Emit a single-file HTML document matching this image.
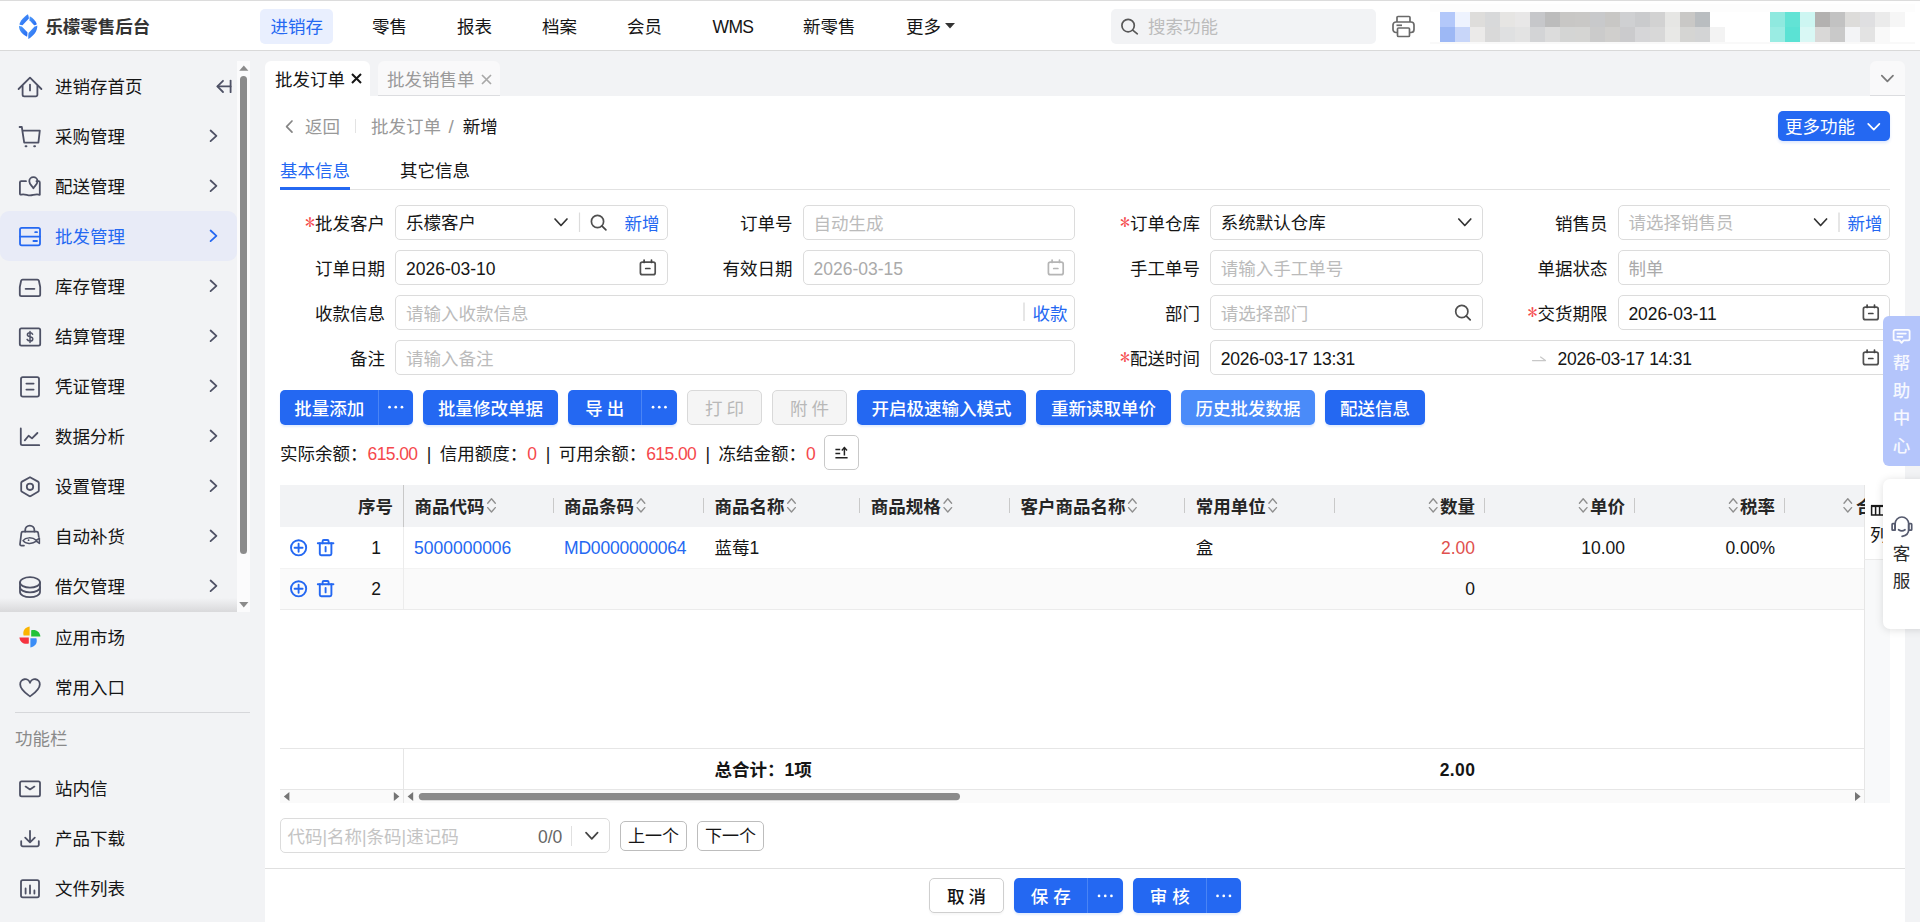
<!DOCTYPE html>
<html lang="zh-CN">
<head>
<meta charset="utf-8">
<title>乐檬零售后台</title>
<style>
*{box-sizing:border-box;margin:0;padding:0}
html,body{width:1920px;height:922px;overflow:hidden;background:#f2f3f5}
body{font-family:"Liberation Sans","Noto Sans CJK SC",sans-serif;font-size:17.5px;color:#151515;position:relative;line-height:1}
.abs{position:absolute}
.t{position:absolute;white-space:nowrap;line-height:24px;height:24px}
svg{position:absolute;overflow:visible}
/* header */
#hdr{position:absolute;left:0;top:0;width:1920px;height:51px;background:#fff;border-top:1px solid #dcdcdc;border-bottom:1px solid #d9d9d9}
.nav{position:absolute;top:14px;line-height:24px;height:24px;font-size:17.5px;color:#151515;white-space:nowrap}
/* sidebar */
#side{position:absolute;left:0;top:51px;width:265px;height:871px;background:#f2f3f5}
.mi{position:absolute;left:55px;font-size:17.5px;line-height:24px;height:24px;color:#151515;white-space:nowrap}
.chev{position:absolute;left:207px;width:12px;height:16px}
/* main */
#panel{position:absolute;left:265px;top:96px;width:1640px;height:826px;background:#fff}
.lbl{position:absolute;font-size:17.5px;line-height:24px;height:24px;white-space:nowrap;text-align:right;color:#151515}
.req{color:#f5484c;font-family:"IPAGothic","Liberation Sans",sans-serif;font-size:20px;position:relative;top:0.4px;line-height:0;margin-right:0}
.inp{position:absolute;height:35px;border:1px solid #dcdcdc;border-radius:5px;background:#fff}
.ph{color:#bbb}
.btn{position:absolute;top:390px;height:35px;background:#2468f2;color:#fff;border-radius:4px;font-size:17.5px;line-height:35px;text-align:center;white-space:nowrap}
.btn.dis{background:#f5f5f5;border:1px solid #dcdcdc;color:#b8b8b8;line-height:33px}
.blue{color:#2468f2}
.red{color:#f23c3c}
.bar{margin:0 8.4px 0 9.4px;color:#151515}
.bal .red{letter-spacing:-0.6px;color:#f5484c}
</style>
</head>
<body>
<!--HEADER-->
<div id="hdr">
<svg style="left:19px;top:13px" width="19" height="26" viewBox="19 14 19 26">
<defs><linearGradient id="lg" x1="0" y1="0" x2="1" y2="1"><stop offset="0" stop-color="#4d9bfa"/><stop offset="1" stop-color="#2468f2"/></linearGradient></defs>
<path d="M27.9 14.3 C23.8 17.2 20.2 20.8 19.4 24.4 C20.4 24.9 21.4 25.1 22.5 25.2 L28.9 18.4 C28.8 17 28.5 15.6 27.9 14.3 Z" fill="url(#lg)"/>
<path d="M29.8 16.2 C33 18 35.8 20.8 36.9 24.2 C36 24.8 35.1 25.1 34.1 25.3 L29.5 20.2 C29.4 18.8 29.5 17.5 29.8 16.2 Z" fill="url(#lg)"/>
<path d="M19 25.8 C18.8 30.6 22.4 34.4 27.1 36.8 C27.4 35.2 27.5 33.6 27.4 32.2 L21.8 26.4 C20.8 26.3 19.9 26.1 19 25.8 Z" fill="url(#lg)"/>
<path d="M37.3 25.4 C37.6 31.4 33.2 36 28.3 39 C28.2 37 28.2 35 28.5 33 L34.6 26.6 C35.5 26.4 36.4 26 37.3 25.4 Z" fill="url(#lg)"/>
</svg>
<div class="t" style="left:45.4px;top:14px;font-size:17.5px;font-weight:700;color:#333;letter-spacing:-0.05px">乐檬零售后台</div>
<div class="abs" style="left:260px;top:8px;width:73px;height:35px;background:#e9effe;border-radius:5px"></div>
<div class="nav" style="left:270.4px;color:#2468f2">进销存</div>
<div class="nav" style="left:372px">零售</div>
<div class="nav" style="left:457px">报表</div>
<div class="nav" style="left:542px">档案</div>
<div class="nav" style="left:627px">会员</div>
<div class="nav" style="left:712.6px;letter-spacing:-0.7px">WMS</div>
<div class="nav" style="left:803px">新零售</div>
<div class="nav" style="left:906px">更多</div>
<svg style="left:944.6px;top:22px" width="11" height="6"><path d="M0 0 L10 0 L5 5.5 Z" fill="#333"/></svg>
<div class="abs" style="left:1111px;top:8px;width:265px;height:35px;background:#f2f3f5;border-radius:5px"></div>
<svg style="left:1119px;top:15px" width="20" height="20" viewBox="0 0 20 20"><circle cx="9.1" cy="9.6" r="6.2" fill="none" stroke="#585858" stroke-width="1.7"/><path d="M13.7 14.2 L18.3 17.8" stroke="#585858" stroke-width="1.7" stroke-linecap="round"/></svg>
<div class="t" style="left:1148px;top:14px;color:#bcbcbc">搜索功能</div>
<svg style="left:1392px;top:14px" width="23" height="23" viewBox="0 0 23 23" fill="none" stroke="#6a6a6a" stroke-width="1.7" stroke-linejoin="round"><path d="M5 7 V2.5 a1 1 0 0 1 1-1 H17 a1 1 0 0 1 1 1 V7"/><rect x="1" y="7" width="21" height="10.5" rx="3"/><rect x="5.5" y="13" width="12" height="8.5" rx="1" fill="#fff"/><path d="M4.5 10.3 H10"/></svg>
<svg style="left:0;top:-1px" width="1920" height="50" shape-rendering="crispEdges"><rect x="1430" y="4" width="485" height="8" fill="#fdfdfd"/><rect x="1430" y="42" width="485" height="2" fill="#f9f9f9"/><rect x="1440" y="12" width="15" height="15" fill="#b3c8fa"/><rect x="1455" y="12" width="15" height="15" fill="#eef3fe"/><rect x="1470" y="12" width="15" height="15" fill="#dedddb"/><rect x="1485" y="12" width="15" height="15" fill="#d8d9da"/><rect x="1500" y="12" width="15" height="15" fill="#e6e5e3"/><rect x="1515" y="12" width="15" height="15" fill="#e8e7e7"/><rect x="1530" y="12" width="15" height="15" fill="#c6c7ca"/><rect x="1545" y="12" width="15" height="15" fill="#bcbcbc"/><rect x="1560" y="12" width="15" height="15" fill="#c8c7c5"/><rect x="1575" y="12" width="15" height="15" fill="#c9c8c6"/><rect x="1590" y="12" width="15" height="15" fill="#c8c9cb"/><rect x="1605" y="12" width="15" height="15" fill="#c8c7c5"/><rect x="1620" y="12" width="15" height="15" fill="#cfd0d2"/><rect x="1635" y="12" width="15" height="15" fill="#cacbcd"/><rect x="1650" y="12" width="15" height="15" fill="#d2d2d2"/><rect x="1665" y="12" width="15" height="15" fill="#e6e6e4"/><rect x="1680" y="12" width="15" height="15" fill="#c9c8c6"/><rect x="1695" y="12" width="15" height="15" fill="#b9bdc0"/><rect x="1440" y="27" width="15" height="15" fill="#9db8f5"/><rect x="1455" y="27" width="15" height="15" fill="#c8d6f9"/><rect x="1470" y="27" width="15" height="15" fill="#ebeae9"/><rect x="1485" y="27" width="15" height="15" fill="#d9d9d9"/><rect x="1500" y="27" width="15" height="15" fill="#dfe0e1"/><rect x="1515" y="27" width="15" height="15" fill="#e3e3e3"/><rect x="1530" y="27" width="15" height="15" fill="#d3d4d6"/><rect x="1545" y="27" width="15" height="15" fill="#dcdcdc"/><rect x="1560" y="27" width="15" height="15" fill="#d4d5d4"/><rect x="1575" y="27" width="15" height="15" fill="#d5d5d3"/><rect x="1590" y="27" width="15" height="15" fill="#cbcbcb"/><rect x="1605" y="27" width="15" height="15" fill="#d0cfcd"/><rect x="1620" y="27" width="15" height="15" fill="#cbcbcd"/><rect x="1635" y="27" width="15" height="15" fill="#d6d6d8"/><rect x="1650" y="27" width="15" height="15" fill="#d8d8d8"/><rect x="1665" y="27" width="15" height="15" fill="#e8e8e6"/><rect x="1680" y="27" width="15" height="15" fill="#d5d5d3"/><rect x="1695" y="27" width="15" height="15" fill="#d3d4d5"/><rect x="1710" y="27" width="15" height="15" fill="#f3f3f3"/><rect x="1770" y="12" width="15" height="15" fill="#8fe9df"/><rect x="1785" y="12" width="15" height="15" fill="#62e3d5"/><rect x="1800" y="12" width="15" height="15" fill="#cdf6f2"/><rect x="1815" y="12" width="15" height="15" fill="#b3b1b0"/><rect x="1830" y="12" width="15" height="15" fill="#c2c2c2"/><rect x="1845" y="12" width="15" height="15" fill="#dddcda"/><rect x="1860" y="12" width="15" height="15" fill="#dfdfe1"/><rect x="1875" y="12" width="15" height="15" fill="#ebebeb"/><rect x="1890" y="12" width="15" height="15" fill="#f6f6f6"/><rect x="1770" y="27" width="15" height="15" fill="#9aece3"/><rect x="1785" y="27" width="15" height="15" fill="#5be2d4"/><rect x="1800" y="27" width="15" height="15" fill="#d9f8f5"/><rect x="1815" y="27" width="15" height="15" fill="#d9d8d7"/><rect x="1830" y="27" width="15" height="15" fill="#c9c9c9"/><rect x="1845" y="27" width="15" height="15" fill="#f3f4f6"/><rect x="1860" y="27" width="15" height="15" fill="#e3e3e3"/><rect x="1875" y="27" width="15" height="15" fill="#f9f9f9"/></svg>
</div>
<!--SIDEBAR-->
<div id="side" style="top:0;height:922px;background:none">
<div class="abs" style="left:0;top:211px;width:237px;height:50px;background:#e8ebf7;border-radius:9px"></div>
<div class="abs" style="left:237px;top:61px;width:13px;height:551px;background:#fbfbfc"></div>
<div class="abs" style="left:240px;top:76px;width:7px;height:478px;background:#8b8b8b;border-radius:3.5px"></div>
<svg style="left:238px;top:60px" width="12" height="552"><path d="M1.2 10.8 L5.8 5.6 L10.4 10.8 Z" fill="#8b8b8b"/><path d="M1.2 542 L5.8 547.4 L10.4 542 Z" fill="#8b8b8b"/></svg>
<div class="abs" style="left:0;top:598px;width:237px;height:14px;background:linear-gradient(to bottom,rgba(242,243,245,0),#d9d9db)"></div>
<svg style="left:0;top:0" width="260" height="922" fill="none" stroke="#4e5165" stroke-width="1.8" stroke-linecap="round" stroke-linejoin="round"><path d="M18.6 89 L30 77.6 L41.4 89"/><path d="M22.6 86 V94.8 a1.6 1.6 0 0 0 1.6 1.6 H35.8 a1.6 1.6 0 0 0 1.6 -1.6 V86"/><path d="M30 84.6 V90.4"/><path d="M230.6 80.6 V92.2"/><path d="M217.6 86.4 H230.6"/><path d="M223 80.8 L217.4 86.4 L223 92"/><path d="M19.6 127 H21.8 L24.2 142.6 H38.4 L39.8 130.6 H22.6"/><path d="M25.6 146.2 h0.8 M34.2 146.2 h0.8" stroke-width="2"/><path d="M26 181.2 H21.2 a1.3 1.3 0 0 0 -1.3 1.3 V193.6 a1 1 0 0 0 1.3 1 C24.5 193.6 27 195.4 30 195.4 C33 195.4 36 193.4 39.8 194.8 V182.4 a1.2 1.2 0 0 0 -1.2 -1.2 H36.5"/><path d="M33.4 177.2 a4.1 4.1 0 0 1 4.1 4.1 c0 2.8 -2.6 4.6 -4.1 6.9 c-1.5 -2.3 -4.1 -4.1 -4.1 -6.9 a4.1 4.1 0 0 1 4.1 -4.1 z"/><path d="M22.6 279.6 H37.4 a1.6 1.6 0 0 1 1.5 1.1 L40.2 287 V294.6 a1.6 1.6 0 0 1 -1.6 1.6 H21.4 a1.6 1.6 0 0 1 -1.6 -1.6 V287 L21.1 280.7 a1.6 1.6 0 0 1 1.5 -1.1 z"/><path d="M25.6 288.8 H34.4"/><rect x="19.8" y="328.4" width="20.4" height="17.2" rx="1.6"/><path d="M32.6 334.2 C32.2 333.2 31.2 332.8 30 332.8 C28.4 332.8 27.4 333.6 27.4 334.8 C27.4 337.6 32.8 336 32.8 338.9 C32.8 340.2 31.6 341 30 341 C28.6 341 27.5 340.4 27.1 339.4 M30 331.4 V342.6" stroke-width="1.5"/><rect x="21" y="377.2" width="18" height="19.4" rx="1.8"/><path d="M26.4 383.6 H33.6 M26.4 389.6 H33.6"/><path d="M20.8 428.4 V443.6 a1.6 1.6 0 0 0 1.6 1.6 H39.2"/><path d="M24.8 440.4 L28.6 435.8 L32 438.4 L37.4 433"/><path d="M30 477.2 L38 481.6 a1.6 1.6 0 0 1 .8 1.4 V490.4 a1.6 1.6 0 0 1 -.8 1.4 L30.8 496 a1.6 1.6 0 0 1 -1.6 0 L22 491.8 a1.6 1.6 0 0 1 -.8 -1.4 V483 a1.6 1.6 0 0 1 .8 -1.4 Z"/><circle cx="30" cy="486.8" r="3.2"/><path d="M25.2 531.6 V530.2 a4.6 4.6 0 0 1 9.2 0 V531.6"/><path d="M24 545.6 H21.4 a1.4 1.4 0 0 1 -1.4 -1.6 L21.4 532.8 a1.4 1.4 0 0 1 1.4 -1.2 H36.8 a1.4 1.4 0 0 1 1.4 1.2 L38.8 537" stroke-width="1.7"/><path d="M23 540.6 C25.5 537.4 32 536.6 36.4 540.4 L39.4 538.2 V543.4 L36.4 541.2 C32 544.6 25.5 544 23 540.6 Z" stroke-width="1.5"/><circle cx="28.6" cy="540.2" r="0.9" fill="#4e5165" stroke="none"/><ellipse cx="30" cy="582.4" rx="10" ry="5.2"/><path d="M20 582.4 V587.2 c0 2.9 4.5 5.2 10 5.2 s10 -2.3 10 -5.2 V582.4"/><path d="M20 587.2 V592 c0 2.9 4.5 5.2 10 5.2 s10 -2.3 10 -5.2 V587.2"/><path d="M30 696.4 C27 694 20.2 689.6 20.2 684.4 a5 5 0 0 1 9.8 -1.6 a5 5 0 0 1 9.8 1.6 C39.8 689.6 33 694 30 696.4 Z"/><rect x="20" y="781.4" width="20" height="15" rx="1.6"/><path d="M25.6 786.6 L30 789.4 L34.4 786.6"/><path d="M30 830.8 V842 M25.2 837.6 L30 842.4 L34.8 837.6"/><path d="M21.2 841.2 V844.8 a1.6 1.6 0 0 0 1.6 1.6 H37.2 a1.6 1.6 0 0 0 1.6 -1.6 V841.2"/><rect x="21" y="880.2" width="18" height="17.2" rx="1.8"/><path d="M25.6 888.4 V893.6 M30 885.4 V893.6 M34.4 890.4 V893.6"/><path d="M210.6 130.5 L216.4 135.8 L210.6 141.1"/><path d="M210.6 180.5 L216.4 185.8 L210.6 191.1"/><path d="M210.6 280.5 L216.4 285.8 L210.6 291.1"/><path d="M210.6 330.5 L216.4 335.8 L210.6 341.1"/><path d="M210.6 380.5 L216.4 385.8 L210.6 391.1"/><path d="M210.6 430.5 L216.4 435.8 L210.6 441.1"/><path d="M210.6 480.5 L216.4 485.8 L210.6 491.1"/><path d="M210.6 530.5 L216.4 535.8 L210.6 541.1"/><path d="M210.6 580.5 L216.4 585.8 L210.6 591.1"/></svg>
<svg style="left:0;top:0" width="260" height="922" fill="none" stroke="#2468f2" stroke-width="1.8" stroke-linecap="round" stroke-linejoin="round"><rect x="20" y="227.8" width="20" height="17.6" rx="1.8"/><path d="M20 236.6 H40 M35.2 232.2 H37 M33.4 241 H37"/><path d="M210.6 230.5 L216.4 235.8 L210.6 241.1"/></svg>
<svg style="left:0;top:0" width="60" height="922">
<path d="M29.6 626.6 C24.6 627.4 22.4 631.4 23.6 635.6 L29.6 635.6 Z" fill="#fbb400"/>
<path d="M40.4 636.4 C39.8 631.2 35.6 629 31.2 630.2 L31.2 636.4 Z" fill="#22c238"/>
<path d="M19.4 637.4 C20.2 642.6 24.4 644.8 28.8 643.4 L28.8 637.4 Z" fill="#f5333f"/>
<path d="M30.4 647.4 C35.4 646.6 37.8 642.6 36.4 638.2 L30.4 638.2 Z" fill="#3b8df6"/>
</svg>
<div class="mi" style="top:75px">进销存首页</div>
<div class="mi" style="top:125px">采购管理</div>
<div class="mi" style="top:175px">配送管理</div>
<div class="mi" style="top:225px;color:#2468f2">批发管理</div>
<div class="mi" style="top:275px">库存管理</div>
<div class="mi" style="top:325px">结算管理</div>
<div class="mi" style="top:375px">凭证管理</div>
<div class="mi" style="top:425px">数据分析</div>
<div class="mi" style="top:475px">设置管理</div>
<div class="mi" style="top:525px">自动补货</div>
<div class="mi" style="top:575px">借欠管理</div>
<div class="mi" style="top:626px">应用市场</div>
<div class="mi" style="top:676px">常用入口</div>
<div class="mi" style="top:776.5px">站内信</div>
<div class="mi" style="top:826.5px">产品下载</div>
<div class="mi" style="top:876.5px">文件列表</div>

<div class="abs" style="left:15px;top:712px;width:235px;height:1px;background:#d6d7da"></div>
<div class="t" style="left:15px;top:727px;color:#8a8a8a">功能栏</div>
</div>
<!--MAIN-->
<div id="tabs">
<div class="abs" style="left:265px;top:61px;width:105px;height:36px;background:#fff;border-radius:6px 6px 0 0"></div>
<div class="t" style="left:275px;top:68px">批发订单</div>
<svg style="left:351px;top:73px" width="11" height="11"><path d="M1 1 L10 10 M10 1 L1 10" stroke="#151515" stroke-width="2"/></svg>
<div class="abs" style="left:378px;top:61px;width:122px;height:35px;background:#f9f9fa;border-radius:6px 6px 0 0;border-bottom:1px solid #dcdde0"></div>
<div class="t" style="left:387px;top:68px;color:#9a9a9a">批发销售单</div>
<svg style="left:481px;top:74px" width="11" height="11"><path d="M1 1 L10 10 M10 1 L1 10" stroke="#a8a8a8" stroke-width="1.7"/></svg>
<div class="abs" style="left:1870px;top:61px;width:35px;height:35px;background:#f9f9fa;border-radius:6px 6px 0 0;border-bottom:1px solid #dcdde0"></div>
<svg style="left:1880px;top:74px" width="14" height="9"><path d="M1.8 1.6 L7.4 7.4 L13 1.6" stroke="#7a7a7a" stroke-width="1.7" fill="none" stroke-linecap="round" stroke-linejoin="round"/></svg>
</div>
<div id="panel">
<div class="t" style="left:40px;top:19px;color:#999">返回</div>
<div class="t" style="left:106px;top:19px;color:#999">批发订单<span style="margin:0 9px 0 7.5px;font-size:19px">/</span><span style="color:#151515">新增</span></div>
<div class="abs" style="left:1513px;top:15px;width:112px;height:30px;background:#2468f2;border-radius:5px;box-shadow:0 2px 3px rgba(36,104,242,.15)"></div>
<div class="t" style="left:1520px;top:19px;color:#fff">更多功能</div>
<div class="t" style="left:15px;top:62.5px;color:#2468f2">基本信息</div>
<div class="t" style="left:135px;top:62.5px;">其它信息</div>
<div class="abs" style="left:15px;top:93px;width:1610px;height:1px;background:#e2e2e2"></div>
<div class="abs" style="left:15px;top:90.5px;width:70px;height:3.5px;background:#2468f2"></div>
<div class="inp" style="left:130px;top:109px;width:273px"></div>
<div class="inp" style="left:538px;top:109px;width:272px"></div>
<div class="inp" style="left:945px;top:109px;width:273px"></div>
<div class="inp" style="left:1353px;top:109px;width:272px"></div>
<div class="inp" style="left:130px;top:154px;width:273px"></div>
<div class="inp" style="left:538px;top:154px;width:272px"></div>
<div class="inp" style="left:945px;top:154px;width:273px"></div>
<div class="inp" style="left:1353px;top:154px;width:272px"></div>
<div class="inp" style="left:130px;top:199px;width:680px"></div>
<div class="inp" style="left:945px;top:199px;width:273px"></div>
<div class="inp" style="left:1353px;top:199px;width:272px"></div>
<div class="inp" style="left:130px;top:244px;width:680px"></div>
<div class="inp" style="left:945px;top:244px;width:680px"></div>
<div class="lbl" style="right:1520px;top:116px"><span class="req">*</span>批发客户</div>
<div class="lbl" style="right:1112.5px;top:116px">订单号</div>
<div class="lbl" style="right:705px;top:116px"><span class="req">*</span>订单仓库</div>
<div class="lbl" style="right:297.5px;top:116px">销售员</div>
<div class="lbl" style="right:1520px;top:161px">订单日期</div>
<div class="lbl" style="right:1112.5px;top:161px">有效日期</div>
<div class="lbl" style="right:705px;top:161px">手工单号</div>
<div class="lbl" style="right:297.5px;top:161px">单据状态</div>
<div class="lbl" style="right:1520px;top:206px">收款信息</div>
<div class="lbl" style="right:705px;top:206px">部门</div>
<div class="lbl" style="right:297.5px;top:206px"><span class="req">*</span>交货期限</div>
<div class="lbl" style="right:1520px;top:251px">备注</div>
<div class="lbl" style="right:705px;top:251px"><span class="req">*</span>配送时间</div>
<div class="t" style="left:141px;top:114.5px;">乐檬客户</div>
<div class="t" style="left:359.5px;top:115.5px;color:#2468f2">新增</div>
<div class="t" style="left:548.5px;top:115.5px;color:#bbb">自动生成</div>
<div class="t" style="left:955.8px;top:114.5px;">系统默认仓库</div>
<div class="t" style="left:1363.4px;top:114.5px;color:#bbb">请选择销售员</div>
<div class="t" style="left:1582.5px;top:115.5px;color:#2468f2">新增</div>
<div class="t" style="left:141px;top:160.5px;">2026-03-10</div>
<div class="t" style="left:548.5px;top:160.5px;color:#aaa">2026-03-15</div>
<div class="t" style="left:955.8px;top:160.5px;color:#bbb">请输入手工单号</div>
<div class="t" style="left:1363.4px;top:160.5px;color:#aaa">制单</div>
<div class="t" style="left:141px;top:205.5px;color:#bbb">请输入收款信息</div>
<div class="t" style="left:767.5px;top:205.5px;color:#2468f2">收款</div>
<div class="t" style="left:955.8px;top:205.5px;color:#bbb">请选择部门</div>
<div class="t" style="left:1363.4px;top:205.5px;">2026-03-11</div>
<div class="t" style="left:141px;top:250.5px;color:#bbb">请输入备注</div>
<div class="t" style="left:955.8px;top:250.5px;letter-spacing:-0.25px">2026-03-17 13:31</div>
<div class="t" style="left:1292.5px;top:250.5px;letter-spacing:-0.25px">2026-03-17 14:31</div>
<div class="abs" style="left:15px;top:294px;width:133px;height:35px;background:#2468f2;border-radius:5px;box-shadow:0 2px 2px rgba(36,104,242,.12)"></div>
<div class="abs" style="left:113.0px;top:294px;width:1px;height:35px;background:#4a84f5"></div>
<div class="t" style="left:15px;width:98.5px;text-align:center;top:300.5px;color:#fff;font-weight:500;word-spacing:-0.8px">批量添加</div>
<div class="abs" style="left:158px;top:294px;width:135px;height:35px;background:#2468f2;border-radius:5px;box-shadow:0 2px 2px rgba(36,104,242,.12)"></div>
<div class="t" style="left:158px;width:135px;text-align:center;top:300.5px;color:#fff;font-weight:500">批量修改单据</div>
<div class="abs" style="left:303px;top:294px;width:109px;height:35px;background:#2468f2;border-radius:5px;box-shadow:0 2px 2px rgba(36,104,242,.12)"></div>
<div class="abs" style="left:376.0px;top:294px;width:1px;height:35px;background:#4a84f5"></div>
<div class="t" style="left:303px;width:73.5px;text-align:center;top:300.5px;color:#fff;font-weight:500;word-spacing:-0.8px">导 出</div>
<div class="abs" style="left:422px;top:294px;width:75px;height:35px;background:#f5f5f5;border:1px solid #d9d9d9;border-radius:5px"></div>
<div class="t" style="left:422px;width:75px;text-align:center;top:300.5px;color:#b8b8b8;word-spacing:-0.8px">打 印</div>
<div class="abs" style="left:507px;top:294px;width:75px;height:35px;background:#f5f5f5;border:1px solid #d9d9d9;border-radius:5px"></div>
<div class="t" style="left:507px;width:75px;text-align:center;top:300.5px;color:#b8b8b8;word-spacing:-0.8px">附 件</div>
<div class="abs" style="left:592px;top:294px;width:169px;height:35px;background:#2468f2;border-radius:5px;box-shadow:0 2px 2px rgba(36,104,242,.12)"></div>
<div class="t" style="left:592px;width:169px;text-align:center;top:300.5px;color:#fff;font-weight:500">开启极速输入模式</div>
<div class="abs" style="left:771px;top:294px;width:135px;height:35px;background:#2468f2;border-radius:5px;box-shadow:0 2px 2px rgba(36,104,242,.12)"></div>
<div class="t" style="left:771px;width:135px;text-align:center;top:300.5px;color:#fff;font-weight:500">重新读取单价</div>
<div class="abs" style="left:916px;top:294px;width:134px;height:35px;background:#4a8bf9;border-radius:5px;box-shadow:0 2px 2px rgba(36,104,242,.12)"></div>
<div class="t" style="left:916px;width:134px;text-align:center;top:300.5px;color:#fff;font-weight:500">历史批发数据</div>
<div class="abs" style="left:1060px;top:294px;width:100px;height:35px;background:#2468f2;border-radius:5px;box-shadow:0 2px 2px rgba(36,104,242,.12)"></div>
<div class="t" style="left:1060px;width:100px;text-align:center;top:300.5px;color:#fff;font-weight:500">配送信息</div>
<div class="t bal" style="left:15px;top:345.5px;">实际余额：<span class="red">615.00</span><span class="bar">|</span>信用额度：<span class="red">0</span><span class="bar">|</span>可用余额：<span class="red">615.00</span><span class="bar">|</span>冻结金额：<span class="red">0</span></div>
<div class="abs" style="left:559px;top:339px;width:35px;height:35px;border:1px solid #c9c9c9;border-radius:5px;background:#fff"></div>

<div class="abs" style="left:15px;top:389px;width:1584px;height:42px;background:#f2f3f5"></div>
<div class="abs" style="left:15px;top:472px;width:1584px;height:41.5px;background:#fafafa"></div>
<div class="abs" style="left:15px;top:513px;width:1584px;height:1px;background:#ebebeb"></div>
<div class="abs" style="left:15px;top:471.5px;width:1584px;height:1px;background:#f3f3f3"></div>
<div class="abs" style="left:15px;top:652px;width:1584px;height:1px;background:#e6e6e6"></div>
<div class="abs" style="left:15px;top:693px;width:1584px;height:1px;background:#e6e6e6"></div>
<div class="abs" style="left:15px;top:694px;width:1584px;height:13px;background:#fafafa"></div>
<div class="abs" style="left:138px;top:389px;width:1px;height:42px;background:#c8c8c8"></div>
<div class="abs" style="left:138px;top:431px;width:1px;height:82px;background:#ececec"></div>
<div class="abs" style="left:138px;top:653px;width:1px;height:54px;background:#e6e6e6"></div>
<div class="abs" style="left:1599px;top:389px;width:26px;height:318px;background:#f8f9fa;border-left:1px solid #e6e6e6"></div><div class="abs" style="left:1600px;top:389px;width:25px;height:74px;background:#fff"></div>
<div class="abs" style="left:1599px;top:463px;width:26px;height:1px;background:#ebebeb"></div>
<div class="abs" style="left:287.5px;top:402px;width:1px;height:15px;background:#c9c9c9"></div>
<div class="abs" style="left:437.5px;top:402px;width:1px;height:15px;background:#c9c9c9"></div>
<div class="abs" style="left:594.0px;top:402px;width:1px;height:15px;background:#c9c9c9"></div>
<div class="abs" style="left:744.0px;top:402px;width:1px;height:15px;background:#c9c9c9"></div>
<div class="abs" style="left:919.0px;top:402px;width:1px;height:15px;background:#c9c9c9"></div>
<div class="abs" style="left:1069.0px;top:402px;width:1px;height:15px;background:#c9c9c9"></div>
<div class="abs" style="left:1219.0px;top:402px;width:1px;height:15px;background:#c9c9c9"></div>
<div class="abs" style="left:1369.0px;top:402px;width:1px;height:15px;background:#c9c9c9"></div>
<div class="abs" style="left:1519.0px;top:402px;width:1px;height:15px;background:#c9c9c9"></div>
<div class="t" style="right:1512px;top:398.5px;font-weight:700;color:#262626">序号</div>
<div class="t" style="left:149.5px;top:398.5px;font-weight:700;color:#262626">商品代码</div>
<div class="t" style="left:299px;top:398.5px;font-weight:700;color:#262626">商品条码</div>
<div class="t" style="left:449.5px;top:398.5px;font-weight:700;color:#262626">商品名称</div>
<div class="t" style="left:605.8px;top:398.5px;font-weight:700;color:#262626">商品规格</div>
<div class="t" style="left:755.4px;top:398.5px;font-weight:700;color:#262626">客户商品名称</div>
<div class="t" style="left:930.7px;top:398.5px;font-weight:700;color:#262626">常用单位</div>
<div class="t" style="right:430px;top:398.5px;font-weight:700;color:#262626">数量</div>
<div class="t" style="right:280px;top:398.5px;font-weight:700;color:#262626">单价</div>
<div class="t" style="right:130px;top:398.5px;font-weight:700;color:#262626">税率</div>
<div class="abs" style="left:1575px;top:389px;width:24.5px;height:42px;overflow:hidden"><div class="t" style="left:16px;top:9.5px;font-weight:700;color:#262626">合计</div></div>
<div class="t" style="left:101px;width:20px;text-align:center;top:439.5px;">1</div>
<div class="t" style="left:101px;width:20px;text-align:center;top:480.5px;">2</div>
<div class="t" style="left:149px;top:439.5px;color:#2468f2">5000000006</div>
<div class="t" style="left:299px;top:439.5px;color:#2468f2;letter-spacing:-0.18px">MD0000000064</div>
<div class="t" style="left:449.5px;top:439.5px;">蓝莓1</div>
<div class="t" style="left:930.7px;top:439.5px;">盒</div>
<div class="t" style="right:430px;top:439.5px;color:#e0504e">2.00</div>
<div class="t" style="right:280px;top:439.5px;">10.00</div>
<div class="t" style="right:130px;top:439.5px;">0.00%</div>
<div class="t" style="right:430px;top:480.5px;">0</div>
<div class="t" style="left:449.5px;top:662px;font-weight:700">总合计：1项</div>
<div class="t" style="right:430px;top:662px;font-weight:700;letter-spacing:0.4px;margin-right:-0.4px">2.00</div>
<div class="t" style="left:1605px;top:427px;font-size:17.5px">列</div>
<div class="abs" style="left:15px;top:722px;width:329.5px;height:35px;border:1px solid #dcdcdc;border-radius:5px"></div>
<div class="t" style="left:22.5px;top:728.5px;color:#c4c4c4">代码|名称|条码|速记码</div>
<div class="t" style="left:273px;top:728.5px;color:#666">0/0</div>
<div class="abs" style="left:306px;top:730px;width:1px;height:19.5px;background:#e0e0e0"></div>
<div class="abs" style="left:355px;top:725px;width:67px;height:29.5px;border:1px solid #bdbdbd;border-radius:5px"></div>
<div class="t" style="left:355px;width:67px;text-align:center;top:729px;font-size:17px">上一个</div>
<div class="abs" style="left:432px;top:725px;width:67px;height:29.5px;border:1px solid #bdbdbd;border-radius:5px"></div>
<div class="t" style="left:432px;width:67px;text-align:center;top:729px;font-size:17px">下一个</div>

<div class="abs" style="left:0px;top:772px;width:1640px;height:1px;background:#e0e0e0"></div>
<div class="abs" style="left:664px;top:782px;width:75px;height:35px;border:1px solid #cfcfcf;border-radius:5px;background:#fff;box-shadow:0 2px 2px rgba(0,0,0,.03)"></div>
<div class="t" style="left:664px;width:75px;text-align:center;top:788.5px;font-weight:500;word-spacing:-0.8px">取 消</div>
<div class="abs" style="left:749px;top:782px;width:109px;height:35px;background:#2468f2;border-radius:5px;box-shadow:0 2px 2px rgba(36,104,242,.12)"></div>
<div class="abs" style="left:822.0px;top:782px;width:1px;height:35px;background:#4a84f5"></div>
<div class="t" style="left:749px;width:73.5px;text-align:center;top:788.5px;color:#fff;font-weight:500">保 存</div>
<div class="abs" style="left:868px;top:782px;width:108px;height:35px;background:#2468f2;border-radius:5px;box-shadow:0 2px 2px rgba(36,104,242,.12)"></div>
<div class="abs" style="left:941.0px;top:782px;width:1px;height:35px;background:#4a84f5"></div>
<div class="t" style="left:868px;width:73.5px;text-align:center;top:788.5px;color:#fff;font-weight:500">审 核</div>

<svg style="left:0;top:0" width="1640" height="826" viewBox="265 96 1640 826"><path d="M292 121 L286.6 126.6 L292 132.2" stroke="#858585" stroke-width="1.7" fill="none" stroke-linecap="round" stroke-linejoin="round"/><path d="M355.5 119 V133" stroke="#e3e3e3" stroke-width="1"/><path d="M1868.2 123.8 L1873.8 129.6 L1879.4 123.8" stroke="#fff" stroke-width="1.7" fill="none" stroke-linecap="round" stroke-linejoin="round"/><path d="M555 219 L561.0 225.5 L567 219" stroke="#333" stroke-width="1.7" fill="none" stroke-linecap="round" stroke-linejoin="round"/><path d="M579.5 212.5 V232" stroke="#dcdcdc" stroke-width="1.2"/><circle cx="597.5" cy="221.5" r="6.1" fill="none" stroke="#505050" stroke-width="1.7"/><path d="M602.1 226.1 L605.9 229.9" stroke="#444" stroke-width="1.7" stroke-linecap="round"/><rect x="640.4" y="262.1" width="14.8" height="12.6" rx="2" fill="none" stroke="#505050" stroke-width="1.7"/><path d="M644.1 260.1 V262.5 M651.5 260.1 V262.5 M645.7 268.5 H649.9" stroke="#444" stroke-width="1.7" stroke-linecap="round"/><rect x="1048.4" y="262.1" width="14.8" height="12.6" rx="2" fill="none" stroke="#b5b5b5" stroke-width="1.7"/><path d="M1052.1 260.1 V262.5 M1059.5 260.1 V262.5 M1053.7 268.5 H1057.9" stroke="#b5b5b5" stroke-width="1.7" stroke-linecap="round"/><path d="M1024 302.5 V321" stroke="#dcdcdc" stroke-width="1.4"/><path d="M1458.8 219 L1464.8 225.5 L1470.8 219" stroke="#333" stroke-width="1.7" fill="none" stroke-linecap="round" stroke-linejoin="round"/><circle cx="1461.8" cy="311.5" r="6.1" fill="none" stroke="#505050" stroke-width="1.7"/><path d="M1466.3999999999999 316.1 L1470.2 319.9" stroke="#444" stroke-width="1.7" stroke-linecap="round"/><path d="M1814.6 219 L1820.6 225.5 L1826.6 219" stroke="#333" stroke-width="1.7" fill="none" stroke-linecap="round" stroke-linejoin="round"/><path d="M1839 212.5 V232" stroke="#dcdcdc" stroke-width="1.4"/><rect x="1863.4" y="307.1" width="14.8" height="12.6" rx="2" fill="none" stroke="#505050" stroke-width="1.7"/><path d="M1867.1 305.1 V307.5 M1874.5 305.1 V307.5 M1868.7 313.5 H1872.9" stroke="#444" stroke-width="1.7" stroke-linecap="round"/><rect x="1863.4" y="352.1" width="14.8" height="12.6" rx="2" fill="none" stroke="#505050" stroke-width="1.7"/><path d="M1867.1 350.1 V352.5 M1874.5 350.1 V352.5 M1868.7 358.5 H1872.9" stroke="#444" stroke-width="1.7" stroke-linecap="round"/><path d="M1532.5 360.6 H1545.5 L1540.6 357" stroke="#c8c8c8" stroke-width="1.2" fill="none" stroke-linecap="round" stroke-linejoin="round"/><circle cx="389.55" cy="407.2" r="1.35" fill="#fff"/><circle cx="395.75" cy="407.2" r="1.35" fill="#fff"/><circle cx="401.95" cy="407.2" r="1.35" fill="#fff"/><circle cx="653.05" cy="407.2" r="1.35" fill="#fff"/><circle cx="659.25" cy="407.2" r="1.35" fill="#fff"/><circle cx="665.45" cy="407.2" r="1.35" fill="#fff"/><circle cx="1099.05" cy="895.9" r="1.35" fill="#fff"/><circle cx="1105.25" cy="895.9" r="1.35" fill="#fff"/><circle cx="1111.45" cy="895.9" r="1.35" fill="#fff"/><circle cx="1217.55" cy="895.9" r="1.35" fill="#fff"/><circle cx="1223.75" cy="895.9" r="1.35" fill="#fff"/><circle cx="1229.95" cy="895.9" r="1.35" fill="#fff"/><g fill="none" stroke="#8f8f8f" stroke-width="1.35" stroke-linecap="round" stroke-linejoin="round"><path d="M487.7 503.2 L491.5 498.8 L495.3 503.2"/><path d="M487.7 507.6 L491.5 512 L495.3 507.6"/><path d="M637.2 503.2 L641.0 498.8 L644.8 503.2"/><path d="M637.2 507.6 L641.0 512 L644.8 507.6"/><path d="M787.7 503.2 L791.5 498.8 L795.3 503.2"/><path d="M787.7 507.6 L791.5 512 L795.3 507.6"/><path d="M944.0 503.2 L947.8 498.8 L951.6 503.2"/><path d="M944.0 507.6 L947.8 512 L951.6 507.6"/><path d="M1128.6 503.2 L1132.4 498.8 L1136.2 503.2"/><path d="M1128.6 507.6 L1132.4 512 L1136.2 507.6"/><path d="M1268.9 503.2 L1272.7 498.8 L1276.5 503.2"/><path d="M1268.9 507.6 L1272.7 512 L1276.5 507.6"/><path d="M1429.4 503.2 L1433.2 498.8 L1437.0 503.2"/><path d="M1429.4 507.6 L1433.2 512 L1437.0 507.6"/><path d="M1579.4 503.2 L1583.2 498.8 L1587.0 503.2"/><path d="M1579.4 507.6 L1583.2 512 L1587.0 507.6"/><path d="M1729.4 503.2 L1733.2 498.8 L1737.0 503.2"/><path d="M1729.4 507.6 L1733.2 512 L1737.0 507.6"/><path d="M1844.0 503.2 L1847.8 498.8 L1851.6 503.2"/><path d="M1844.0 507.6 L1847.8 512 L1851.6 507.6"/></g><g stroke="#222" stroke-width="1.5" fill="none" stroke-linecap="butt"><path d="M835.4 449.6 H840.2 M835.4 453.4 H840.2 M835.4 457.8 H847.6 M844.4 455.4 V447.6"/><path d="M841.8 450.4 L844.4 447.6 L847 450.4" stroke-linejoin="miter"/></g><circle cx="298.6" cy="547.8" r="7.6" fill="none" stroke="#2468f2" stroke-width="1.9"/><path d="M294.6 547.8 H302.6 M298.6 543.8 V551.8" stroke="#2468f2" stroke-width="1.9" stroke-linecap="round"/><g fill="none" stroke="#2468f2" stroke-width="1.9" stroke-linecap="round" stroke-linejoin="round"><path d="M317.8 543.1999999999999 H333.4"/><path d="M322.6 543.1999999999999 V541.1999999999999 a1.2 1.2 0 0 1 1.2 -1.2 H327.4 a1.2 1.2 0 0 1 1.2 1.2 V543.1999999999999"/><path d="M319.8 543.1999999999999 V553.8 a1.4 1.4 0 0 0 1.4 1.4 H330 a1.4 1.4 0 0 0 1.4 -1.4 V543.1999999999999"/><path d="M325.6 546.9999999999999 V551.4"/></g><circle cx="298.6" cy="588.8" r="7.6" fill="none" stroke="#2468f2" stroke-width="1.9"/><path d="M294.6 588.8 H302.6 M298.6 584.8 V592.8" stroke="#2468f2" stroke-width="1.9" stroke-linecap="round"/><g fill="none" stroke="#2468f2" stroke-width="1.9" stroke-linecap="round" stroke-linejoin="round"><path d="M317.8 584.1999999999999 H333.4"/><path d="M322.6 584.1999999999999 V582.1999999999999 a1.2 1.2 0 0 1 1.2 -1.2 H327.4 a1.2 1.2 0 0 1 1.2 1.2 V584.1999999999999"/><path d="M319.8 584.1999999999999 V594.8 a1.4 1.4 0 0 0 1.4 1.4 H330 a1.4 1.4 0 0 0 1.4 -1.4 V584.1999999999999"/><path d="M325.6 587.9999999999999 V592.4"/></g><path d="M289.40000000000003 791.9 L283.8 796.5 L289.40000000000003 801.1 Z" fill="#757575"/><path d="M393.8 791.9 L399.40000000000003 796.5 L393.8 801.1 Z" fill="#757575"/><path d="M413.20000000000005 791.9 L407.6 796.5 L413.20000000000005 801.1 Z" fill="#757575"/><path d="M1855 791.9 L1860.6 796.5 L1855 801.1 Z" fill="#757575"/><rect x="418.8" y="793" width="541.2" height="7.2" rx="3.6" fill="#8b8b8b"/><path d="M586 832.6 L591.8 838.8 L597.6 832.6" stroke="#444" stroke-width="1.7" fill="none" stroke-linecap="round" stroke-linejoin="round"/><g stroke="#1a1a1a" stroke-width="1.5" fill="none"><rect x="1871.6" y="506.2" width="12.4" height="8.8"/><path d="M1871 506 H1884" stroke-width="2.2"/><path d="M1875.6 506.2 V515 M1879.6 506.2 V515"/></g></svg>
</div>
<div class="abs" style="left:1883px;top:316px;width:37px;height:150px;background:#b4c5fb;border-radius:6px 0 0 6px"></div>
<svg style="left:1883px;top:316px" width="37" height="150" viewBox="1883 316 37 150"><path d="M1895.2 329.8 H1908 a1.6 1.6 0 0 1 1.6 1.6 V338.8 a1.6 1.6 0 0 1 -1.6 1.6 H1903.6 L1901.6 342.8 L1899.6 340.4 H1895.2 a1.6 1.6 0 0 1 -1.6 -1.6 V331.4 a1.6 1.6 0 0 1 1.6 -1.6 Z M1897.4 333.6 H1905.8 M1897.4 336.8 H1902.4" fill="none" stroke="#fbfcff" stroke-width="1.8" stroke-linejoin="round" stroke-linecap="round"/></svg>
<div class="t" style="left:1883px;width:37px;text-align:center;top:351px;color:#f6f8ff;font-weight:500">帮</div>
<div class="t" style="left:1883px;width:37px;text-align:center;top:378.6px;color:#f6f8ff;font-weight:500">助</div>
<div class="t" style="left:1883px;width:37px;text-align:center;top:406.3px;color:#f6f8ff;font-weight:500">中</div>
<div class="t" style="left:1883px;width:37px;text-align:center;top:433.8px;color:#f6f8ff;font-weight:500">心</div>
<div class="abs" style="left:1883px;top:478.5px;width:45px;height:150px;background:#fff;border-radius:7px 0 0 7px;box-shadow:0 1px 9px rgba(0,0,0,.13)"></div>
<svg style="left:1883px;top:478px" width="37" height="150" viewBox="1883 478 37 150"><g fill="none" stroke="#555a6e" stroke-width="1.7" stroke-linecap="round" stroke-linejoin="round" transform="translate(-0.2,0.4)"><path d="M1895.3 529.4 V523.4 a6.8 6.8 0 0 1 13.6 0 V529.2 c0 3.6 -2.8 6.2 -6.6 6.8"/><rect x="1892.3" y="523.3" width="3" height="6.4" rx="0.7"/><rect x="1908.9" y="523.3" width="3" height="6.4" rx="0.7"/><path d="M1898.8 529.3 q3.3 2.3 6.4 0"/></g></svg>
<div class="t" style="left:1883px;width:37px;text-align:center;top:541.5px;color:#2b2b2b">客</div>
<div class="t" style="left:1883px;width:37px;text-align:center;top:569px;color:#2b2b2b">服</div>

</body>
</html>
